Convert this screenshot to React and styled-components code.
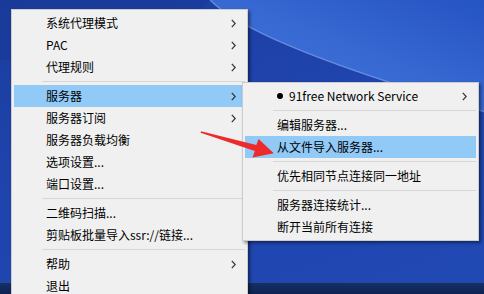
import styled, { createGlobalStyle } from "styled-components";

const GlobalStyle = createGlobalStyle`
  html, body {
    margin: 0;
    padding: 0;
    background: #1a3fa6;
  }
  body {
    font-family: "Noto Sans CJK SC", "Noto Sans", sans-serif;
  }
`

const Desktop = styled.div`
  position: relative;
  width: 484px;
  height: 294px;
  overflow: hidden;
  display: flex;
  flex-direction: column;
  background: linear-gradient(160deg, #1b3d9f 0%, #1f44ad 45%, #2149b4 100%);
`

const Wallpaper = styled.svg`
  flex: 1;
  display: block;
  width: 484px;
`

const Taskbar = styled.div`
  height: 11px;
  background: linear-gradient(180deg, #14306a 0%, #0d2250 100%);
  border-top: 1px solid #2b4a8a;
`

const Menu = styled.div`
  position: absolute;
  left: ${p => p.$x}px;
  top: ${p => p.$y}px;
  width: 237px;
  box-sizing: border-box;
  background: #f0f0f0;
  border: 1px solid #cccccc;
  padding: 2px;
  box-shadow: 2px 2px 3px rgba(0, 0, 0, 0.45);
  font-size: 12px;
  color: #000;
`

const Item = styled.div`
  display: flex;
  align-items: center;
  height: 22px;
  padding-left: 32px;
  padding-right: 9px;
  background: ${p => (p.$active ? "#91c9f7" : "transparent")};
  white-space: nowrap;
`

const Label = styled.span`
  line-height: 22px;
`

const Chevron = styled.svg`
  margin-left: auto;
  width: 5px;
  height: 9px;
`

const Separator = styled.div`
  height: 7px;
  margin-left: 28px;
  display: flex;
  align-items: center;
  &::after {
    content: "";
    flex: 1;
    height: 1px;
    background: #d7d7d7;
  }
`

const Dot = styled.span`
  width: 6px;
  height: 6px;
  border-radius: 50%;
  background: #000;
  margin-right: 6px;
`

const Annotation = styled.svg`
  position: absolute;
  left: 0;
  top: 0;
  width: 484px;
  height: 294px;
  pointer-events: none;
`

function Arrow() {
  return (
    <Chevron viewBox="0 0 5 9">
      <path d="M0.8 0.8 L4.2 4.5 L0.8 8.2" fill="none" stroke="#333" strokeWidth="1.2" />
    </Chevron>
  )
}

function MenuItem({ children, sub, active, dot }) {
  return (
    <Item $active={active}>
      {dot && <Dot />}
      <Label>{children}</Label>
      {sub && <Arrow />}
    </Item>
  )
}

export default function App() {
  return (
    <>
      <GlobalStyle />
      <Desktop>
        <Wallpaper viewBox="0 0 484 283" preserveAspectRatio="none">
          <defs>
            <linearGradient id="sky" x1="0" y1="1" x2="1" y2="0">
              <stop offset="0" stopColor="#4878da" />
              <stop offset="0.55" stopColor="#3767d1" />
              <stop offset="1" stopColor="#2554c3" />
            </linearGradient>
          </defs>
          <path d="M210 0 C 235 25, 300 58, 484 112 L484 0 Z" fill="url(#sky)" />
          <path d="M210 0 C 235 25, 300 58, 484 112" fill="none" stroke="#7aa0ea" strokeWidth="1.4" opacity="0.7" />
          <path d="M0 0 L210 0 Q 120 80 0 60 Z" fill="#183894" opacity="0.5" />
        </Wallpaper>
        <Taskbar />

        <Menu $x={11} $y={9}>
          <MenuItem sub>系统代理模式</MenuItem>
          <MenuItem sub>PAC</MenuItem>
          <MenuItem sub>代理规则</MenuItem>
          <Separator />
          <MenuItem sub active>服务器</MenuItem>
          <MenuItem sub>服务器订阅</MenuItem>
          <MenuItem>服务器负载均衡</MenuItem>
          <MenuItem>选项设置...</MenuItem>
          <MenuItem>端口设置...</MenuItem>
          <Separator />
          <MenuItem>二维码扫描...</MenuItem>
          <MenuItem>剪贴板批量导入ssr://链接...</MenuItem>
          <Separator />
          <MenuItem sub>帮助</MenuItem>
          <MenuItem>退出</MenuItem>
        </Menu>

        <Menu $x={242} $y={82}>
          <MenuItem sub dot>91free Network Service</MenuItem>
          <Separator />
          <MenuItem>编辑服务器...</MenuItem>
          <MenuItem active>从文件导入服务器...</MenuItem>
          <Separator />
          <MenuItem>优先相同节点连接同一地址</MenuItem>
          <Separator />
          <MenuItem>服务器连接统计...</MenuItem>
          <MenuItem>断开当前所有连接</MenuItem>
        </Menu>

        <Annotation viewBox="0 0 484 294">
          <polygon
            points="201,131.2 256.3,145 258.6,139 273.8,153.2 252.6,157.4 254.8,151 200.6,132.8"
            fill="#ee2b2b"
          />
        </Annotation>
      </Desktop>
    </>
  )
}
